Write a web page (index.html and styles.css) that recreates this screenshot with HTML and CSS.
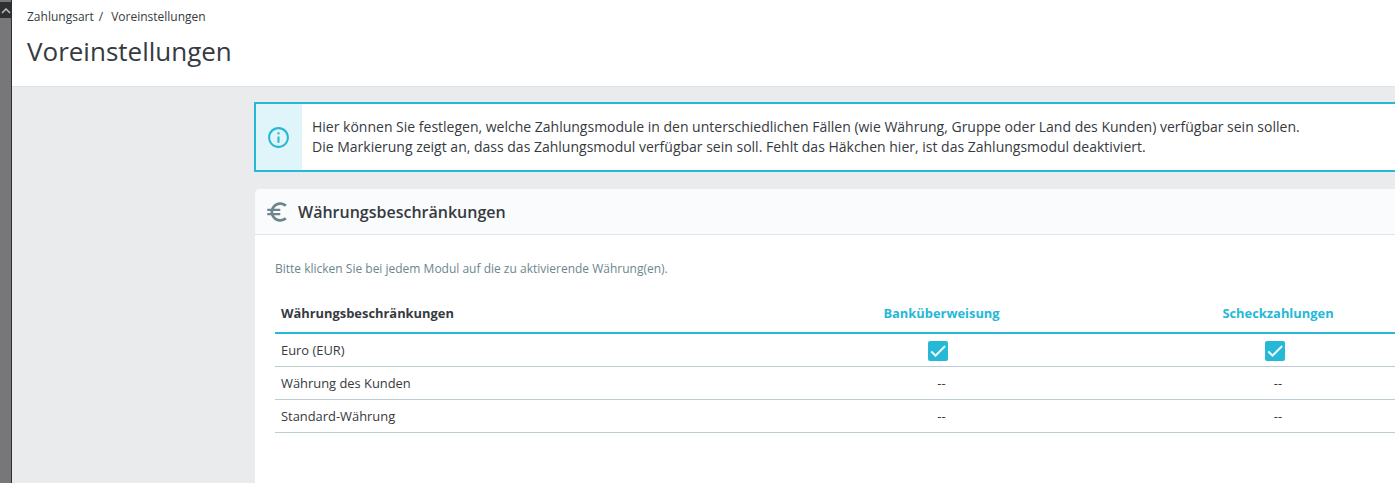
FILE: index.html
```html
<!DOCTYPE html>
<html lang="en">
<head>
    <meta charset="UTF-8">
    <meta name="viewport" content="width=device-width, initial-scale=1.0">
    <title>Voreinstellungen</title>
    <link rel="stylesheet" href="styles.css">
</head>
<body>
    <div class="strip">
        <div class="strip-top">
            <svg width="10" height="6" viewBox="0 0 10 6"><path d="M1 5l4-4 4 4" fill="none" stroke="#b9b9bb" stroke-width="1.6"/></svg>
        </div>
    </div>
    <div class="page">
        <div class="head">
            <div class="crumbs"><span>Zahlungsart</span><span class="sep">/</span><span>Voreinstellungen</span></div>
            <h1>Voreinstellungen</h1>
        </div>
        <div class="content">
            <div class="alert">
                <div class="alert-icon">
                    <svg class="info" width="25" height="25" viewBox="0 0 24 24"><path fill="#25b9d7" d="M11 17h2v-6h-2v6zm1-15C6.480 2 2 6.480 2 12s4.480 10 10 10 10-4.480 10-10S17.520 2 12 2zm0 18c-4.410 0-8-3.590-8-8s3.590-8 8-8 8 3.590 8 8-3.590 8-8 8zM11 9h2V7h-2v2z"/></svg>
                </div>
                <div class="alert-text">
                    <p>Hier können Sie festlegen, welche Zahlungsmodule in den unterschiedlichen Fällen (wie Währung, Gruppe oder Land des Kunden) verfügbar sein sollen.</p>
                    <p>Die Markierung zeigt an, dass das Zahlungsmodul verfügbar sein soll. Fehlt das Häkchen hier, ist das Zahlungsmodul deaktiviert.</p>
                </div>
            </div>
            <div class="panel">
                <div class="panel-head">
                    <svg class="euro" width="26" height="26" viewBox="0 0 24 24"><path fill="#6c868e" d="M15 18.500c-2.510 0-4.680-1.420-5.760-3.500H15v-2H8.580c-.05-.33-.08-.66-.08-1s.03-.67.08-1H15V9H9.240C10.320 6.920 12.500 5.500 15 5.500c1.610 0 3.090.59 4.230 1.570L21 5.300C19.410 3.870 17.300 3 15 3c-3.920 0-7.240 2.510-8.480 6H3v2h3.060c-.04.33-.06.66-.06 1s.02.67.06 1H3v2h3.520c1.240 3.490 4.560 6 8.480 6 2.310 0 4.410-.87 6-2.300l-1.780-1.770c-1.130.98-2.600 1.570-4.220 1.570z"/></svg>
                    <h2>Währungsbeschränkungen</h2>
                </div>
                <div class="panel-body">
                    <p class="hint">Bitte klicken Sie bei jedem Modul auf die zu aktivierende Währung(en).</p>
                    <table>
                        <thead>
                            <tr>
                                <th>Währungsbeschränkungen</th>
                                <th class="mod">Banküberweisung</th>
                                <th class="mod">Scheckzahlungen</th>
                            </tr>
                        </thead>
                        <tbody>
                            <tr>
                                <td>Euro (EUR)</td>
                                <td class="cell"><span class="check"><svg width="20" height="20" viewBox="0 0 24 24"><path fill="#fff" stroke="#fff" stroke-width="0.6" d="M9 16.170L4.830 12l-1.420 1.410L9 19 21 7l-1.410-1.410z"/></svg></span></td>
                                <td class="cell"><span class="check"><svg width="20" height="20" viewBox="0 0 24 24"><path fill="#fff" stroke="#fff" stroke-width="0.6" d="M9 16.170L4.830 12l-1.420 1.410L9 19 21 7l-1.410-1.410z"/></svg></span></td>
                            </tr>
                            <tr>
                                <td>Währung des Kunden</td>
                                <td class="cell">--</td>
                                <td class="cell">--</td>
                            </tr>
                            <tr>
                                <td>Standard-Währung</td>
                                <td class="cell">--</td>
                                <td class="cell">--</td>
                            </tr>
                        </tbody>
                    </table>
                </div>
            </div>
        </div>
    </div>
</body>
</html>
```

FILE: styles.css
```css
html, body {
    margin: 0;
    padding: 0;
    height: 100%;
    overflow: hidden;
}
body {
    display: flex;
    font-family: "Open Sans", sans-serif;
    background: #eaebec;
    color: #363a41;
}
.strip {
    flex: 0 0 12px;
    box-sizing: border-box;
    padding-top: 2px;
    background: #77777a;
    border-right: 1px solid #2f3033;
}
.strip-top {
    height: 16px;
    background: #2f3033;
    display: flex;
    justify-content: center;
    padding-top: 6px;
    box-sizing: border-box;
}
.page {
    flex: 1;
    min-width: 0;
}
.head {
    background: #fff;
    height: 87px;
    box-sizing: border-box;
    padding: 9px 0 0 15px;
    border-bottom: 1px solid #dfe1e3;
}
.crumbs {
    font-size: 12px;
    line-height: 16px;
}
.sep {
    margin: 0 8px 0 5px;
}
h1 {
    margin: 4px 0 0;
    font-size: 26px;
    line-height: 44px;
    font-weight: 400;
}
.content {
    width: 1210px;
    margin-left: 242px;
    padding-top: 15px;
}
.alert {
    display: flex;
    height: 70px;
    box-sizing: border-box;
    border: 2px solid #25b9d7;
    background: #fff;
}
.alert-icon {
    flex: 0 0 46px;
    background: #dff5f9;
    display: flex;
    align-items: center;
    justify-content: center;
}
.info {
    margin-right: 1px;
}
.alert-text {
    padding: 13px 0 0 10px;
    font-size: 14px;
    line-height: 20px;
}
.alert-text p {
    margin: 0;
    white-space: nowrap;
}
.panel {
    margin: 17px 0 0 1px;
    background: #fff;
    border-radius: 5px 5px 0 0;
    height: 300px;
}
.panel-head {
    height: 45px;
    background: #fafbfc;
    border-bottom: 1px solid #dbe6e9;
    border-radius: 5px 5px 0 0;
    display: flex;
    align-items: center;
    padding-left: 9px;
}
.euro {
    margin-right: 8px;
}
h2 {
    margin: 0;
    font-size: 16px;
    font-weight: 600;
}
.panel-body {
    padding: 26px 20px 0;
}
.hint {
    margin: 0;
    font-size: 12px;
    line-height: 16px;
    color: #6c868e;
}
table {
    width: 1171px;
    margin-top: 16px;
    border-collapse: collapse;
    table-layout: fixed;
    font-size: 12.9px;
}
th {
    box-sizing: border-box;
    height: 40px;
    padding: 0 6px;
    text-align: left;
    font-weight: 700;
    font-size: 12.9px;
    border-bottom: 2px solid #25b9d7;
}
th:first-child {
    width: 498px;
}
th.mod {
    color: #25b9d7;
    text-align: center;
    width: 336px;
}
th:nth-child(2) {
    width: 337px;
}
td {
    height: 32px;
    padding: 0 6px;
    border-bottom: 1px solid #bbcdd2;
}
td.cell {
    text-align: center;
}
.check {
    display: inline-flex;
    width: 20px;
    height: 20px;
    margin: 2px 7px 0 0;
    border-radius: 2px;
    background: #25b9d7;
    vertical-align: middle;
}
```
